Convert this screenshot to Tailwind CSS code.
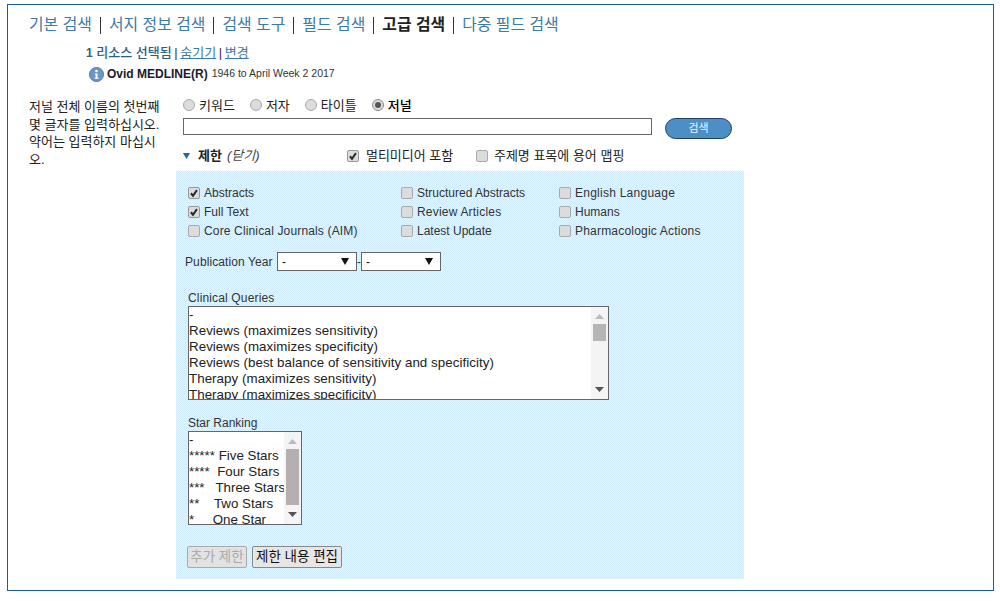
<!DOCTYPE html>
<html lang="ko">
<head>
  <meta charset="UTF-8">
  <title>고급 검색</title>
  <script src="https://cdn.jsdelivr.net/npm/@tailwindcss/browser@4"></script>
</head>
<body class="bg-white h-[601px] overflow-hidden font-['Liberation_Sans','Noto_Sans_CJK_KR',sans-serif] text-[12px] text-[#222]">
<svg class="hidden"><defs>
  <symbol id="tick" viewBox="0 0 12 12"><path d="M2.300 6.300 4.800 9.300 9.500 2.500" fill="none" stroke="#2b2b2b" stroke-width="2.400"/></symbol>
</defs></svg>

<div class="ml-[7px] mt-[4px] w-[987px] h-[587px] border border-[#1a5f94] pt-[11px] pl-[21px]">

  <nav class="flex items-center h-[18px] text-[15.9px] leading-[18px] text-[#3b7ba8]">
    <a>기본 검색</a><span class="w-px h-[17px] bg-[#333] mx-[8px]"></span>
    <a>서지 정보 검색</a><span class="w-px h-[17px] bg-[#333] mx-[8px]"></span>
    <a>검색 도구</a><span class="w-px h-[17px] bg-[#333] mx-[8px]"></span>
    <a>필드 검색</a><span class="w-px h-[17px] bg-[#333] mx-[8px]"></span>
    <a class="font-bold text-[#222]">고급 검색</a><span class="w-px h-[17px] bg-[#333] mx-[8px]"></span>
    <a>다중 필드 검색</a>
  </nav>

  <div class="ml-[57px] mt-[11px] h-[16px] leading-[16px] text-[13px] text-[#3b7ba8]">
    <b class="text-[#2b5f85] text-[12px]">1</b> <span class="text-[#2b5f85] font-medium">리소스 선택됨</span> <span class="text-[#333] -mx-[1px]">|</span> <u>숨기기</u> <span class="text-[#333] -mx-[1px]">|</span> <u>변경</u>
  </div>
  <div class="ml-[60px] mt-[5px] h-[16px] flex items-center gap-[3px]">
    <svg width="15" height="15" viewBox="0 0 15 15"><circle cx="7.500" cy="7.500" r="7" fill="#6c97c4" stroke="#4a78a8"/><circle cx="7.500" cy="4" r="1.300" fill="#fff"/><path d="M6 6.500h2.500v4.200h1v1H5.600v-1h1V7.500H6z" fill="#fff"/></svg>
    <span class="font-bold text-[12px] text-[#1a1a2e]">Ovid MEDLINE(R)</span>
    <span class="text-[10.5px] text-[#333] ml-[1px]">1946 to April Week 2 2017</span>
  </div>

  <div class="flex mt-[15px]">
    <p class="w-[130px] text-[13px] leading-[17.7px] pt-[1px] whitespace-nowrap">저널 전체 이름의 첫번째<br>몇 글자를 입력하십시오.<br>약어는 입력하지 마십시<br>오.</p>

    <div class="ml-[17px]">
      <div class="ml-[7px] w-[560px]">
        <div class="flex items-center h-[18px] text-[13px]">
          <span class="w-[12px] h-[12px] rounded-full border border-[#aaa] bg-[#dcdcdc] mr-[4px] -mt-[3px]"></span><span class="mr-[15px]">키워드</span>
          <span class="w-[12px] h-[12px] rounded-full border border-[#aaa] bg-[#dcdcdc] mr-[4px] -mt-[3px]"></span><span class="mr-[15px]">저자</span>
          <span class="w-[12px] h-[12px] rounded-full border border-[#aaa] bg-[#dcdcdc] mr-[4px] -mt-[3px]"></span><span class="mr-[15px]">타이틀</span>
          <span class="w-[12px] h-[12px] rounded-full border border-[#888] bg-[#dcdcdc] mr-[4px] -mt-[3px] flex items-center justify-center"><i class="block w-[6px] h-[6px] rounded-full bg-[#555]"></i></span><span class="text-black font-medium">저널</span>
        </div>
        <div class="flex items-start mt-[3px]">
          <div class="w-[469px] h-[17px] border border-[#666] bg-white"></div>
          <button class="ml-[13px] w-[67px] h-[21px] rounded-full border border-[#1d3f66] bg-[#4d8fc4] text-white/90 text-[11px] leading-none">검색</button>
        </div>
        <div class="flex items-center h-[18px] mt-[8px] text-[13px]">
          <svg width="7" height="6" viewBox="0 0 7 6" class="mr-[8px]"><path d="M0 0h7L3.500 6z" fill="#1f6a9c"/></svg>
          <b class="text-[#222] mr-[5px]">제한</b>
          <i class="text-[#444] w-[33px] whitespace-nowrap">(닫기)</i>
          <span class="ml-[87px] w-[12px] h-[12px] rounded-[2px] border border-[#999] bg-[#dcdcdc] flex"><svg class="w-full h-full"><use href="#tick"/></svg></span>
          <span class="ml-[7px] w-[85px] whitespace-nowrap">멀티미디어 포함</span>
          <span class="ml-[25px] w-[12px] h-[12px] rounded-[2px] border border-[#aaa] bg-[#dcdcdc]"></span>
          <span class="ml-[6px] whitespace-nowrap">주제명 표목에 용어 맵핑</span>
        </div>
      </div>

      <div class="w-[568px] h-[408px] mt-[6px] bg-[repeating-conic-gradient(#cfeaf8_0_25%,#e6f5fd_0_50%)] bg-[length:2px_2px] pl-[12px] pt-[12px] text-[#333]">
        <div class="grid grid-cols-[213px_158px_170px] auto-rows-[19px] items-center">
          <label class="flex items-center gap-[4px]"><span class="w-[12px] h-[12px] rounded-[2px] border border-[#999] bg-[#dcdcdc] flex"><svg class="w-full h-full"><use href="#tick"/></svg></span>Abstracts</label>
          <label class="flex items-center gap-[4px]"><span class="w-[12px] h-[12px] rounded-[2px] border border-[#aaa] bg-[#dcdcdc]"></span>Structured Abstracts</label>
          <label class="flex items-center gap-[4px] tracking-[0.25px]"><span class="w-[12px] h-[12px] rounded-[2px] border border-[#aaa] bg-[#dcdcdc]"></span>English Language</label>
          <label class="flex items-center gap-[4px]"><span class="w-[12px] h-[12px] rounded-[2px] border border-[#999] bg-[#dcdcdc] flex"><svg class="w-full h-full"><use href="#tick"/></svg></span>Full Text</label>
          <label class="flex items-center gap-[4px] tracking-[0.2px]"><span class="w-[12px] h-[12px] rounded-[2px] border border-[#aaa] bg-[#dcdcdc]"></span>Review Articles</label>
          <label class="flex items-center gap-[4px]"><span class="w-[12px] h-[12px] rounded-[2px] border border-[#aaa] bg-[#dcdcdc]"></span>Humans</label>
          <label class="flex items-center gap-[4px] tracking-[0.15px]"><span class="w-[12px] h-[12px] rounded-[2px] border border-[#aaa] bg-[#dcdcdc]"></span>Core Clinical Journals (AIM)</label>
          <label class="flex items-center gap-[4px]"><span class="w-[12px] h-[12px] rounded-[2px] border border-[#aaa] bg-[#dcdcdc]"></span>Latest Update</label>
          <label class="flex items-center gap-[4px] tracking-[0.2px]"><span class="w-[12px] h-[12px] rounded-[2px] border border-[#aaa] bg-[#dcdcdc]"></span>Pharmacologic Actions</label>
        </div>

        <div class="flex items-center -ml-[3px] mt-[12px] h-[19px]">
          <span class="w-[92px] whitespace-nowrap tracking-[0.1px]">Publication Year</span>
          <div class="w-[80px] h-[19px] border border-[#666] bg-white flex items-center justify-between pl-[4px] pr-[7px] text-[#111]">-<svg width="8" height="7" viewBox="0 0 8 7"><path d="M0 0h8L4 7z" fill="#111"/></svg></div>
          <span class="w-[4px] text-center leading-none">-</span>
          <div class="w-[80px] h-[19px] border border-[#666] bg-white flex items-center justify-between pl-[4px] pr-[7px] text-[#111]">-<svg width="8" height="7" viewBox="0 0 8 7"><path d="M0 0h8L4 7z" fill="#111"/></svg></div>
        </div>

        <div class="mt-[20px] leading-[14px] tracking-[0.15px]">Clinical Queries</div>
        <div class="relative w-[421px] h-[94px] mt-[1px] border border-[#666] bg-white overflow-hidden text-[#222] text-[13.33px] leading-[16px] tracking-[0.05px]">
          <div>-</div>
          <div>Reviews (maximizes sensitivity)</div>
          <div>Reviews (maximizes specificity)</div>
          <div>Reviews (best balance of sensitivity and specificity)</div>
          <div>Therapy (maximizes sensitivity)</div>
          <div>Therapy (maximizes specificity)</div>
          <div class="absolute right-0 top-0 w-[17px] h-full bg-[#f4f4f4] flex flex-col items-center">
            <svg width="9" height="5" viewBox="0 0 9 5" class="mt-[7px]"><path d="M4.500 0 9 5H0z" fill="#bbb"/></svg>
            <i class="block w-[13px] h-[17px] mt-[5px] bg-[#b5b5b5]"></i>
            <svg width="9" height="5" viewBox="0 0 9 5" class="mt-auto mb-[7px]"><path d="M0 0h9L4.500 5z" fill="#555"/></svg>
          </div>
        </div>

        <div class="mt-[16px] leading-[14px]">Star Ranking</div>
        <div class="relative w-[114px] h-[94px] mt-[1px] border border-[#666] bg-white overflow-hidden text-[#222] text-[13.33px] leading-[16px]">
          <div>-</div>
          <div class="whitespace-pre">***** Five Stars</div>
          <div class="whitespace-pre">****  Four Stars</div>
          <div class="whitespace-pre">***   Three Stars</div>
          <div class="whitespace-pre">**    Two Stars</div>
          <div class="whitespace-pre">*     One Star</div>
          <div class="absolute right-0 top-0 w-[17px] h-full bg-[#f4f4f4] flex flex-col items-center">
            <svg width="9" height="5" viewBox="0 0 9 5" class="mt-[7px]"><path d="M4.500 0 9 5H0z" fill="#bbb"/></svg>
            <i class="block w-[13px] h-[56px] mt-[5px] bg-[#b5b0b0]"></i>
            <svg width="9" height="5" viewBox="0 0 9 5" class="mt-auto mb-[7px]"><path d="M0 0h9L4.500 5z" fill="#555"/></svg>
          </div>
        </div>

        <div class="flex gap-[5px] mt-[21px] -ml-[1px]">
          <button class="w-[60px] h-[22px] border border-[#aaa] rounded-[2px] bg-[#e2e2e2] text-[#aaa] text-[13.5px] leading-none whitespace-nowrap">추가 제한</button>
          <button class="w-[90px] h-[22px] border border-[#888] rounded-[2px] bg-[#e6e6e6] text-[#111] text-[13.5px] leading-none whitespace-nowrap">제한 내용 편집</button>
        </div>
      </div>
    </div>
  </div>
</div>
</body>
</html>
